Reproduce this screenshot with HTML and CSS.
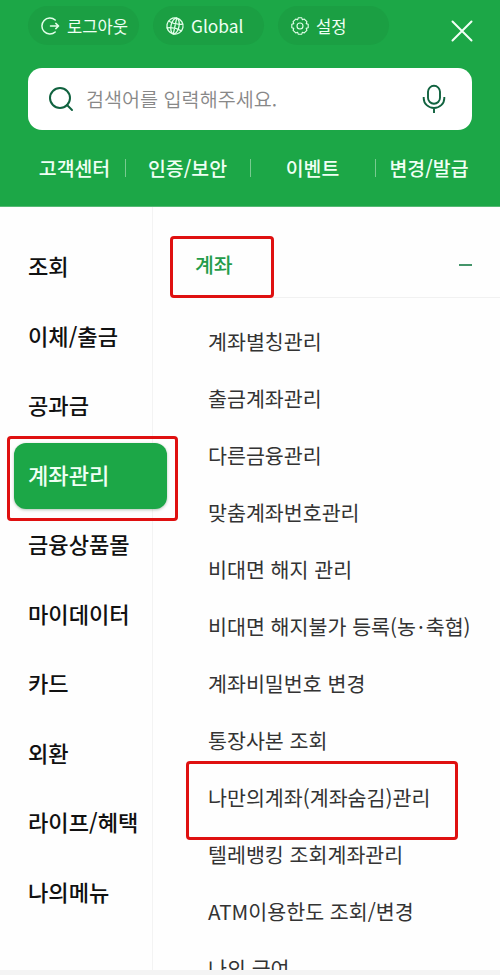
FILE: index.html
```html
<!DOCTYPE html>
<html lang="ko">
<head>
<meta charset="utf-8">
<title>전체메뉴</title>
<link rel="stylesheet" href="styles.css">
</head>
<body>
<div class="app">
  <header class="header">
    <div class="tools">
      <div class="pill">
        <svg class="pill-icon" viewBox="0 0 20 20"><path d="M15.2 4A8 8 0 1 0 15.2 16M10.5 10H18.6M15.8 7.4L18.6 10L15.8 12.6"/></svg>
        <span>로그아웃</span>
      </div>
      <div class="pill pill-global">
        <svg class="pill-icon" viewBox="0 0 20 20"><g transform="rotate(12 10 10)"><circle cx="10" cy="10" r="8.1"/><ellipse cx="10" cy="10" rx="4" ry="8.1"/><path d="M10 1.9V18.1M2.9 6.6Q10 9 17.1 6.6M2.9 13.4Q10 11 17.1 13.4"/></g></svg>
        <span>Global</span>
      </div>
      <div class="pill pill-settings">
        <svg class="pill-icon" viewBox="0 0 20 20"><path d="M8.2 1.8H11.8L12.4 3.8L14.3 3.1L16.9 5.7L16.2 7.6L18.2 8.2V11.8L16.2 12.4L16.9 14.3L14.3 16.9L12.4 16.2L11.8 18.2H8.2L7.6 16.2L5.7 16.9L3.1 14.3L3.8 12.4L1.8 11.8V8.2L3.8 7.6L3.1 5.7L5.7 3.1L7.6 3.8Z"/><circle cx="10" cy="10" r="3"/></svg>
        <span>설정</span>
      </div>
      <svg class="close" viewBox="0 0 22 22"><path d="M1.5 1.5L20.5 20.5M20.5 1.5L1.5 20.5"/></svg>
    </div>
    <div class="search">
      <svg class="search-icon" viewBox="0 0 26 26"><circle cx="12" cy="12" r="10"/><path d="M19 19L24 24"/></svg>
      <span class="placeholder">검색어를 입력해주세요.</span>
      <svg class="mic" viewBox="0 0 24 30"><rect x="6" y="1.8" width="12" height="18" rx="6"/><path d="M1.7 13V14.2A10.3 9.8 0 0 0 22.3 14.2V13M12 24V29"/></svg>
    </div>
    <nav class="quick">
      <a>고객센터</a><a>인증/보안</a><a>이벤트</a><a>변경/발급</a>
    </nav>
  </header>
  <main class="content">
    <ul class="side">
      <li>조회</li>
      <li>이체/출금</li>
      <li>공과금</li>
      <li class="active">계좌관리</li>
      <li>금융상품몰</li>
      <li>마이데이터</li>
      <li>카드</li>
      <li>외환</li>
      <li>라이프/혜택</li>
      <li>나의메뉴</li>
    </ul>
    <section class="panel">
      <div class="panel-head"><span>계좌</span><i class="minus"></i></div>
      <ul class="list">
        <li>계좌별칭관리</li>
        <li>출금계좌관리</li>
        <li>다른금융관리</li>
        <li>맞춤계좌번호관리</li>
        <li>비대면 해지 관리</li>
        <li>비대면 해지불가 등록(농<span class="dot">·</span>축협)</li>
        <li>계좌비밀번호 변경</li>
        <li>통장사본 조회</li>
        <li>나만의계좌(계좌숨김)관리</li>
        <li>텔레뱅킹 조회계좌관리</li>
        <li>ATM이용한도 조회/변경</li>
        <li>나의 급여</li>
      </ul>
    </section>
  </main>
  <div class="bottom"></div>
  <div class="mark mark-group"></div>
  <div class="mark mark-side"></div>
  <div class="mark mark-item"></div>
</div>
</body>
</html>
```

FILE: styles.css
```css
* { box-sizing: border-box; }
body {
  margin: 0;
  font-family: "Noto Sans CJK KR", sans-serif;
  background: #fefefe;
}
ul { list-style: none; margin: 0; padding: 0; }
svg { fill: none; stroke-linecap: round; stroke-linejoin: round; flex: none; display: block; }
.app {
  position: relative;
  width: 500px;
  height: 975px;
  overflow: hidden;
  display: flex;
  flex-direction: column;
}
.header {
  flex: none;
  height: 207px;
  padding-top: 6px;
  background: #1ca747;
  border-bottom: 1px solid #55b974;
  color: #effff4;
}
.tools {
  display: flex;
  gap: 14px;
  height: 39px;
  padding-left: 28px;
}
.pill {
  width: 111px;
  height: 39px;
  padding: 0 0 0 12px;
  border-radius: 20px;
  background: #1b9f43;
  display: flex;
  align-items: center;
  gap: 7px;
  font-size: 16.6px;
  line-height: 24px;
  white-space: nowrap;
}
.pill-icon { width: 20px; height: 20px; stroke: #e2ffea; stroke-width: 1.5; }
.pill-global .pill-icon { stroke-width: 1.3; }
.pill-global { font-size: 17.3px; gap: 6px; }
.pill-settings .pill-icon { stroke-width: 1.1; }
.pill-settings { gap: 6px; }
.close { width: 22px; height: 22px; margin: 14px 0 0 48px; stroke: #f2fff6; stroke-width: 2; }
.search {
  width: 444px;
  height: 62px;
  margin: 23px 0 0 28px;
  padding: 0 26px 0 20px;
  border-radius: 14px;
  background: #fff;
  display: flex;
  align-items: center;
}
.search-icon { width: 26px; height: 26px; stroke: #10623f; stroke-width: 2; }
.placeholder {
  flex: 1;
  padding-left: 12px;
  font-size: 19.6px;
  font-weight: 350;
  line-height: 28px;
  color: #888;
}
.mic { width: 24px; height: 30px; stroke: #10623f; stroke-width: 1.9; stroke-linecap: butt; }
.quick {
  display: grid;
  grid-template-columns: 125px 125px 125px 125px;
  margin-top: 24px;
  font-size: 19.4px;
  font-weight: 500;
  line-height: 28px;
  text-align: center;
}
.quick a {
  display: flex;
  align-items: center;
  justify-content: center;
  white-space: nowrap;
}
.quick a:first-child { padding-left: 24px; }
.quick a:last-child { padding-right: 17px; }
.quick a + a::before {
  content: "";
  width: 1px;
  height: 18px;
  margin-right: auto;
  background: #78cb90;
}
.quick a + a::after { content: ""; width: 1px; margin-left: auto; }
.content { flex: 1; min-height: 0; display: flex; overflow: hidden; }
.side {
  width: 153px;
  flex: none;
  padding-top: 24px;
  border-right: 1px solid #f3f3f3;
}
.side li {
  height: 69.5px;
  padding-left: 28px;
  font-size: 22.1px;
  font-weight: 500;
  line-height: 69.5px;
  color: #111;
  white-space: nowrap;
}
.side .active {
  width: 153px;
  height: 66px;
  margin: 3.5px 0 0 14px;
  padding-left: 14px;
  border-radius: 12px;
  background: #1ca747;
  box-shadow: 0 1px 3px rgba(0, 60, 20, .3);
  color: #effff4;
  line-height: 63px;
  position: relative;
}
.panel { flex: 1; min-width: 0; }
.panel-head {
  height: 91px;
  margin-left: 17px;
  padding: 25px 28px 0 25px;
  border-bottom: 1px solid #f1f1f1;
  display: flex;
  align-items: center;
  justify-content: space-between;
  font-size: 20.5px;
  font-weight: 500;
  color: #249c4a;
}
.panel-head span { margin-top: -2px; }
.minus { width: 13px; height: 2px; background: #44956a; }
.list { padding: 15px 0 0 55px; }
.list li {
  height: 57px;
  font-size: 20.6px;
  line-height: 57px;
  color: #333;
  white-space: nowrap;
}
.dot { padding: 0 2px; }
.bottom { flex: none; height: 5px; background: #f4f4f4; }
.mark {
  position: absolute;
  border: 3px solid #df1010;
  border-radius: 4px;
}
.mark-group { left: 170px; top: 236px; width: 104px; height: 62px; }
.mark-side { left: 7px; top: 436px; width: 171px; height: 85px; }
.mark-item { left: 186px; top: 761px; width: 272px; height: 79px; }
```
